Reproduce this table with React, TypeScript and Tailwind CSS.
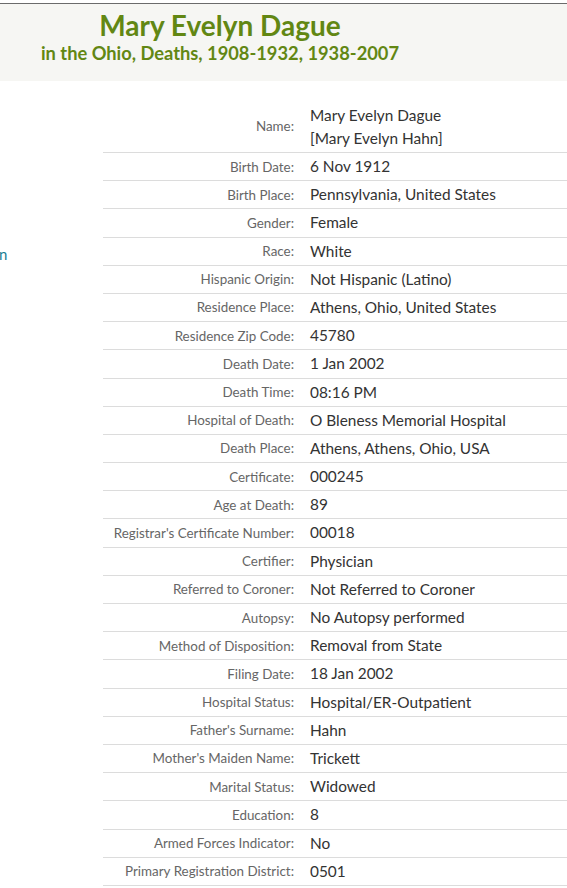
import React from 'react'

const rows: [string, string][] = [
  ['Birth Date:', '6 Nov 1912'],
  ['Birth Place:', 'Pennsylvania, United States'],
  ['Gender:', 'Female'],
  ['Race:', 'White'],
  ['Hispanic Origin:', 'Not Hispanic (Latino)'],
  ['Residence Place:', 'Athens, Ohio, United States'],
  ['Residence Zip Code:', '45780'],
  ['Death Date:', '1 Jan 2002'],
  ['Death Time:', '08:16 PM'],
  ['Hospital of Death:', 'O Bleness Memorial Hospital'],
  ['Death Place:', 'Athens, Athens, Ohio, USA'],
  ['Certificate:', '000245'],
  ['Age at Death:', '89'],
  ["Registrar's Certificate Number:", '00018'],
  ['Certifier:', 'Physician'],
  ['Referred to Coroner:', 'Not Referred to Coroner'],
  ['Autopsy:', 'No Autopsy performed'],
  ['Method of Disposition:', 'Removal from State'],
  ['Filing Date:', '18 Jan 2002'],
  ['Hospital Status:', 'Hospital/ER-Outpatient'],
  ["Father's Surname:", 'Hahn'],
  ["Mother's Maiden Name:", 'Trickett'],
  ['Marital Status:', 'Widowed'],
  ['Education:', '8'],
  ['Armed Forces Indicator:', 'No'],
  ['Primary Registration District:', '0501'],
]

export default function App() {
  return (
    <div className="w-[567px] h-[888px] overflow-hidden bg-white pt-[3px] font-['Lato',sans-serif]">
      {/* Header */}
      <div className="h-[78px] border-t border-[#6b6b6b] bg-[#f6f6f3]">
        <div className="w-[440px] flex flex-col items-center pt-[5px]">
          <h1 className="text-[28px] leading-[33px] font-bold text-[#628713]">Mary Evelyn Dague</h1>
          <h2 className="text-[18.3px] leading-[22px] font-bold text-[#628713]">
            in the Ohio, Deaths, 1908-1932, 1938-2007
          </h2>
        </div>
      </div>

      <div className="flex pt-[20px]">
        {/* Sidebar (cut off) */}
        <div className="w-[103px] shrink-0 pt-[143px]">
          <span className="block -ml-[1px] text-[15px] leading-[20px] text-[#1b7d93]">n</span>
        </div>

        {/* Record table */}
        <div className="flex-1">
          <div className="flex items-center h-[52px] border-b border-[#dcdcdc]">
            <div className="w-[207px] pr-[16px] text-right text-[13.4px] text-[#666]">Name:</div>
            <div className="text-[15.4px] leading-[23px] text-[#333]">
              <div>Mary Evelyn Dague</div>
              <div>[Mary Evelyn Hahn]</div>
            </div>
          </div>
          {rows.map(([label, value]) => (
            <div key={label} className="flex items-center h-[28.2px] border-b border-[#dcdcdc]">
              <div className="w-[207px] pr-[16px] text-right text-[13.4px] text-[#666]">{label}</div>
              <div className="text-[15.4px] text-[#333]">{value}</div>
            </div>
          ))}
        </div>
      </div>
    </div>
  )
}
